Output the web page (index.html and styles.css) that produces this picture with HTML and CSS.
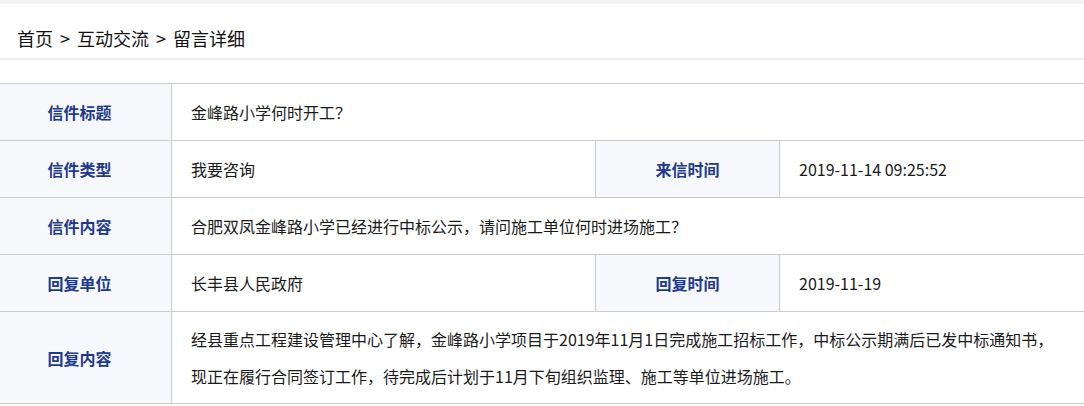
FILE: index.html
```html
<!DOCTYPE html>
<html lang="zh-CN">
<head>
<meta charset="utf-8">
<title>留言详细</title>
<link rel="stylesheet" href="styles.css">
</head>
<body>
<div class="topband"></div>
<div class="crumb">首页<span class="arrow">&gt;</span>互动交流<span class="arrow">&gt;</span>留言详细</div>
<div class="sep"></div>
<div class="detail">
  <div class="row">
    <div class="label">信件标题</div>
    <div class="value span3">金峰路小学何时开工？</div>
  </div>
  <div class="row">
    <div class="label">信件类型</div>
    <div class="value">我要咨询</div>
    <div class="label">来信时间</div>
    <div class="value">2019-11-14 09:25:52</div>
  </div>
  <div class="row">
    <div class="label">信件内容</div>
    <div class="value span3">合肥双凤金峰路小学已经进行中标公示，请问施工单位何时进场施工？</div>
  </div>
  <div class="row">
    <div class="label">回复单位</div>
    <div class="value">长丰县人民政府</div>
    <div class="label">回复时间</div>
    <div class="value">2019-11-19</div>
  </div>
  <div class="row tall">
    <div class="label">回复内容</div>
    <div class="value span3 para">经县重点工程建设管理中心了解，金峰路小学项目于2019年11月1日完成施工招标工作，中标公示期满后已发中标通知书，<br>现正在履行合同签订工作，待完成后计划于11月下旬组织监理、施工等单位进场施工。</div>
  </div>
</div>
</body>
</html>
```

FILE: styles.css
```css
html, body {
  margin: 0;
  padding: 0;
  background: #fff;
  font-family: "Noto Sans CJK SC", "Noto Sans", sans-serif;
  color: #222;
  overflow: hidden;
}
.topband {
  height: 4px;
  background: #f2f2f2;
}
.crumb {
  height: 32px;
  padding: 22px 0 0 17px;
  font-size: 18px;
  line-height: 24px;
  color: #111;
}
.arrow {
  display: inline-block;
  margin: 0 7px;
}
.sep {
  height: 2px;
  background: #eeeeee;
}
.detail {
  margin-top: 23px;
  margin-left: -12px;
  width: 1096px;
  border-bottom: 1px solid #cccccc;
}
.row {
  display: grid;
  grid-template-columns: 184px 424px 184px 1fr;
  border-top: 1px solid #cccccc;
  min-height: 56px;
}
.row.tall {
  min-height: 91px;
}
.label {
  background: #f7f8fc;
  color: #1d3a8e;
  font-weight: bold;
  font-size: 16px;
  display: flex;
  align-items: center;
  justify-content: center;
  border-right: 1px solid #cccccc;
}
.value {
  font-size: 16px;
  display: flex;
  align-items: center;
  padding-left: 19px;
  border-right: 1px solid #cccccc;
  color: #1a1a1a;
}
.value:last-child {
  border-right: none;
}
.span3 {
  grid-column: 2 / 5;
}
.para {
  display: block;
  line-height: 37px;
  padding-top: 9px;
  padding-bottom: 8px;
  padding-right: 10px;
}
```
